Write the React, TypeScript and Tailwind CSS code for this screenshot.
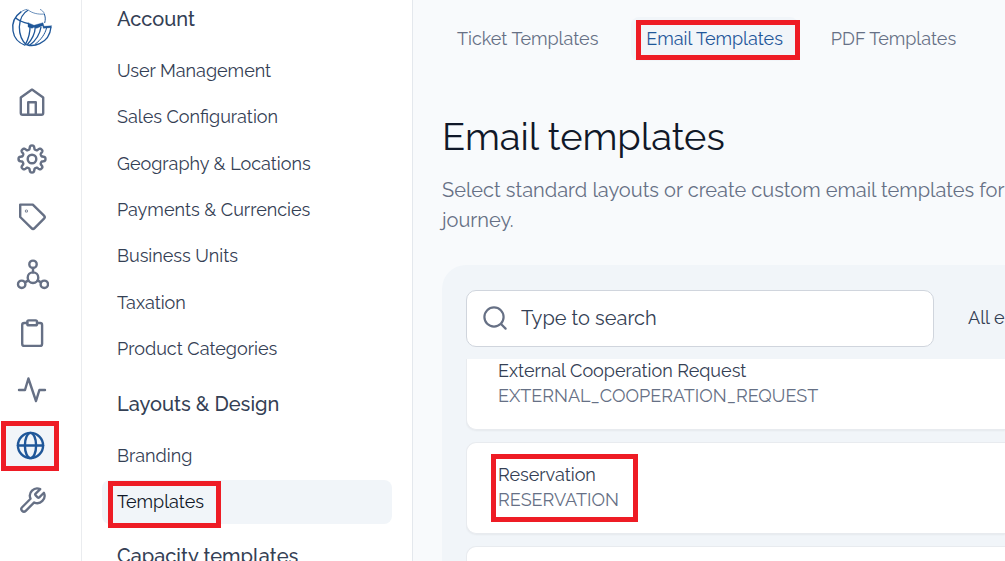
import { useState, type ReactNode } from "react";
import clsx from "clsx";

type RailItem = { label: string; icon: ReactNode; marked?: boolean };
type Template = { name: string; code: string; marked?: boolean };

// eight-tooth cog outline around (16, 16)
const gearPath = (() => {
  const points: string[] = [];
  for (let i = 0; i < 160; i++) {
    const angle = (i / 160) * Math.PI * 2;
    const radius = 11.6 + 1.9 * Math.tanh(2.2 * Math.cos(8 * angle));
    points.push(
      `${(16 + radius * Math.cos(angle)).toFixed(2)} ${(16 + radius * Math.sin(angle)).toFixed(2)}`
    );
  }
  return `M${points.join("L")}Z`;
})();

const railItems: RailItem[] = [
  {
    label: "Home",
    icon: (
      <>
        <path d="M4.8 11.4 16 3.6l11.2 7.8V27a1.8 1.8 0 0 1-1.8 1.8H6.6A1.8 1.8 0 0 1 4.8 27z" />
        <path d="M12.2 28.5V16.2h7.6v12.3" />
      </>
    ),
  },
  {
    label: "Settings",
    icon: (
      <>
        <path d={gearPath} />
        <circle cx="16" cy="16" r="4.3" />
      </>
    ),
  },
  {
    label: "Tags",
    icon: (
      <>
        <path d="M4.2 4.6h12.6l11.2 11a2.2 2.2 0 0 1 0 3.1l-9.4 9.4a2.2 2.2 0 0 1-3.1 0L4.2 17z" />
        <circle cx="10.4" cy="11" r="0.4" />
      </>
    ),
  },
  {
    label: "Network",
    icon: (
      <>
        <circle cx="17" cy="7.3" r="3.7" />
        <circle cx="17" cy="20.7" r="5.3" />
        <circle cx="5.7" cy="27.3" r="3.7" />
        <circle cx="28.3" cy="27.3" r="3.7" />
        <path d="M17 11v4.4M12.4 23.4l-3.4 2M21.6 23.4l3.4 2" />
      </>
    ),
  },
  {
    label: "Orders",
    icon: (
      <>
        <path d="M11.3 9H8.2a2 2 0 0 0-2 2v19a2 2 0 0 0 2 2h15.9a2 2 0 0 0 2-2V11a2 2 0 0 0-2-2H21" />
        <rect x="11.3" y="6.4" width="9.7" height="4.9" rx="1.4" />
      </>
    ),
  },
  {
    label: "Activity",
    icon: <path d="M3 19h6l3.4-11.5L20 30l3.4-11H29" />,
  },
  {
    label: "Configuration",
    marked: true,
    icon: (
      <>
        <circle cx="14.5" cy="17.5" r="12.6" />
        <ellipse cx="14.5" cy="17.5" rx="5.6" ry="12.6" />
        <path d="M2 17.5h25" />
      </>
    ),
  },
  {
    label: "Tools",
    icon: (
      <path
        transform="translate(1.7 1) scale(1.22)"
        strokeWidth="1.9"
        d="M14.7 6.3a1 1 0 0 0 0 1.4l1.6 1.6a1 1 0 0 0 1.4 0l3.77-3.77a6 6 0 0 1-7.94 7.94l-6.91 6.91a2.12 2.12 0 0 1-3-3l6.91-6.91a6 6 0 0 1 7.94-7.94l-3.76 3.76z"
      />
    ),
  },
];

const accountLinks = [
  "User Management",
  "Sales Configuration",
  "Geography & Locations",
  "Payments & Currencies",
  "Business Units",
  "Taxation",
  "Product Categories",
];

const tabs = ["Ticket Templates", "Email Templates", "PDF Templates"];

const templates: Template[] = [
  { name: "External Cooperation Request", code: "EXTERNAL_COOPERATION_REQUEST" },
  { name: "Reservation", code: "RESERVATION", marked: true },
  { name: "Reservation Cancelled", code: "RESERVATION_CANCELLED" },
];

const Marker = ({ className }: { className: string }) => (
  <span
    className={clsx("pointer-events-none absolute border-5 border-[#ee1c25]", className)}
  />
);

const Logo = () => (
  <svg viewBox="0 0 138 135" className="h-[45px] w-[46px]" fill="none" stroke="#1f5799">
    {/* globe */}
    <path d="M34 20C14 34 5 55 9 78c3 20 17 36 37 43" strokeWidth="4" />
    <path d="M34 20c6-4 11-6 18-7" strokeWidth="2" />
    <path d="M55 15C38 24 29 44 28 66c0 22 9 43 22 55" strokeWidth="4" />
    <path d="M16 38c11 9 23 14 40 18" strokeWidth="4" />
    {/* sail */}
    <path d="M55 15c10 9 29 14 48 12" strokeWidth="2" />
    <path d="M90 13c6 3 11 7 13 13" strokeWidth="2" />
    <path d="M103 27c3 8 4 16 1 27" strokeWidth="3" />
    {/* ribbons */}
    <path
      d="M54 53l18 8 27-8 3 11 23-2-2 6-13 1-10 1-2-8-18 8-8-3-6 3-12-4z"
      fill="#1f5799"
      strokeWidth="1"
    />
    <path d="M60 62c1 20-4 38-14 57" strokeWidth="4" />
    <path d="M76 66c-1 18-9 37-25 54" strokeWidth="4" />
    <path d="M93 66c-3 20-15 40-34 55" strokeWidth="4" />
    <path d="M110 68c-5 20-17 36-35 50" strokeWidth="3" />
    <path d="M123 66c-2 21-14 41-34 50-13 6-24 7-37 4" strokeWidth="4" />
  </svg>
);

const Rail = () => (
  <nav className="flex w-[82px] shrink-0 flex-col border-r border-[#eaecef] bg-white">
    <a href="#" aria-label="Dashboard" className="mb-6 ml-[10px] mt-[5px] block">
      <Logo />
    </a>
    {railItems.map((item) => (
      <a
        key={item.label}
        href="#"
        aria-label={item.label}
        className={clsx(
          "relative flex h-[57px] shrink-0 items-center pl-4",
          item.marked ? "text-[#1f5799]" : "text-[#667085]"
        )}
      >
        {item.marked && <Marker className="left-px top-[5px] h-[50px] w-[58px] bg-[#f1f5f9]" />}
        <svg
          viewBox="0 0 33 33"
          className="relative size-[33px]"
          fill="none"
          stroke="currentColor"
          strokeWidth="2.4"
          strokeLinecap="round"
          strokeLinejoin="round"
        >
          {item.icon}
        </svg>
      </a>
    ))}
  </nav>
);

const MenuHeading = ({ children }: { children: ReactNode }) => (
  <h2 className="mb-4 pl-[15px] text-xl leading-7 font-medium text-[#344054]">{children}</h2>
);

const MenuLink = ({ label, active }: { label: string; active?: boolean }) => (
  <li className="relative">
    <a
      href="#"
      className={clsx(
        "flex h-11 items-center rounded-lg pl-[15px] text-lg",
        active ? "bg-[#f1f5f9] text-[#101828]" : "text-[#344054]"
      )}
    >
      {label}
    </a>
    {active && <Marker className="left-[6px] top-px h-[47px] w-[113px]" />}
  </li>
);

const Menu = () => (
  <aside className="w-[331px] shrink-0 border-r border-[#e4e8ed] bg-white pl-5 pr-5 pt-[5px]">
    <MenuHeading>Account</MenuHeading>
    <ul className="mb-[19px] flex h-[322px] flex-col justify-between">
      {accountLinks.map((label) => (
        <MenuLink key={label} label={label} />
      ))}
    </ul>
    <MenuHeading>Layouts &amp; Design</MenuHeading>
    <ul className="mb-[18px] flex flex-col gap-[2px]">
      <MenuLink label="Branding" />
      <MenuLink label="Templates" active />
    </ul>
    <MenuHeading>Capacity templates</MenuHeading>
  </aside>
);

const App = () => {
  const [tab, setTab] = useState("Email Templates");
  const [query, setQuery] = useState("");

  return (
    <div className="flex h-screen overflow-hidden bg-[#f8fafc] font-[Raleway,Lato,sans-serif]">
      <Rail />
      <Menu />

      <main className="min-w-0 flex-1 overflow-hidden pl-[29px] pt-[17px]">
        {/* Tabs */}
        <div role="tablist" className="flex gap-[18px]">
          {tabs.map((label) => (
            <button
              key={label}
              role="tab"
              aria-selected={tab === label}
              onClick={() => setTab(label)}
              className={clsx(
                "relative h-11 shrink-0 rounded-lg px-[15px] text-lg",
                tab === label ? "bg-[#f1f5f9] text-[#1f5799]" : "text-[#667085]"
              )}
            >
              {label}
              {label === "Email Templates" && (
                <Marker className="left-[5px] top-[3px] h-10 w-[164px]" />
              )}
            </button>
          ))}
        </div>

        <h1 className="mt-[52px] text-[38px] leading-12 text-[#101828]">Email templates</h1>
        <p className="mt-[14px] text-xl leading-[30px] whitespace-nowrap text-[#667085]">
          Select standard layouts or create custom email templates for
          <br />
          journey.
        </p>

        <section className="mt-[30px] rounded-tl-3xl bg-[#f1f5f9] pl-6 pt-[25px]">
          <div className="flex items-center">
            <label className="flex h-[57px] w-[468px] shrink-0 items-center rounded-[10px] border border-[#d0d5dd] bg-white pb-0.5 pl-4">
              <svg
                viewBox="0 0 24 24"
                className="size-6 shrink-0"
                fill="none"
                stroke="#667085"
                strokeWidth="2.2"
                strokeLinecap="round"
              >
                <circle cx="11" cy="11" r="9.6" />
                <path d="m18 18 4.6 4.6" />
              </svg>
              <input
                type="text"
                aria-label="Search templates"
                placeholder="Type to search"
                value={query}
                onChange={(e) => setQuery(e.target.value)}
                className="ml-[14px] min-w-0 flex-1 text-xl outline-none placeholder:text-[#344054]"
              />
            </label>
            <button className="ml-[34px] shrink-0 pb-0.5 text-lg text-[#344054]">All emails</button>
          </div>

          {/* Template list, scrolled part of the way into the first card */}
          <div className="mt-3 overflow-hidden">
            <ul className="-mt-[21px] flex flex-col gap-3">
              {templates.map((item) => (
                <li
                  key={item.code}
                  className="relative h-[92px] rounded-l-[10px] border border-r-0 border-[#e8ebef] bg-white py-[19px] pl-[31px] text-lg leading-[25px] shadow-xs"
                >
                  <p className="text-[#344054]">{item.name}</p>
                  <p className="text-[#667085]">{item.code}</p>
                  {item.marked && <Marker className="left-6 top-[11px] h-[68px] w-[147px]" />}
                </li>
              ))}
            </ul>
          </div>
        </section>
      </main>
    </div>
  );
};

export default App;
